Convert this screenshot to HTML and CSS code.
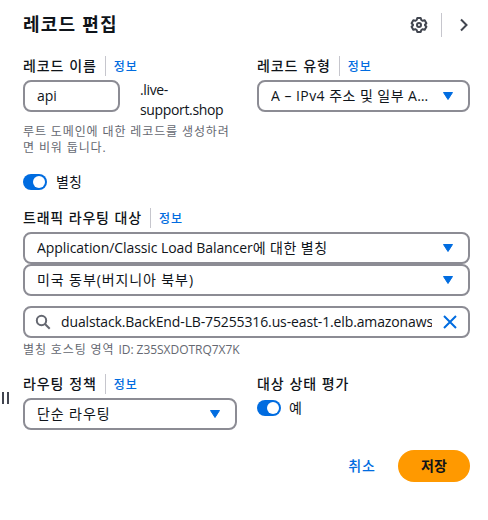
FILE: index.html
```html
<!DOCTYPE html>
<html lang="ko">
<head>
<meta charset="utf-8">
<title>레코드 편집</title>
<link rel="stylesheet" href="styles.css">
</head>
<body>
<div class="handle"><i></i><i></i></div>
<main class="panel">
  <header class="header">
    <h1>레코드 편집</h1>
    <svg class="gear" width="18" height="18" viewBox="0 0 18 18"><path d="M7.300 2h3.400l.6 2 1.400.8 2-.5 1.700 2.900L15 8.700v.6l1.400 1.500-1.700 2.900-2-.5-1.400.8-.6 2H7.300l-.6-2-1.400-.8-2 .5-1.700-2.900L3 9.300v-.6L1.600 7.200l1.700-2.900 2 .5 1.400-.8z"/><circle cx="9" cy="9" r="2"/></svg>
    <span class="bar"></span>
    <svg class="chevron" width="10" height="14" viewBox="0 0 10 14"><path d="M2 1.500 7.500 7 2 12.500"/></svg>
  </header>

  <div class="columns top">
    <section>
      <div class="label"><b>레코드 이름</b><a>정보</a></div>
      <div class="name">
        <div class="field api">api</div>
        <div class="domain">.live-<br><span>support.shop</span></div>
      </div>
      <p class="hint">루트 도메인에 대한 레코드를 생성하려<br>면 비워 둡니다.</p>
    </section>
    <section>
      <div class="label"><b>레코드 유형</b><a>정보</a></div>
      <div class="field type"><span class="t-type">A – IPv4 주소 및 일부 A…</span><svg class="caret" width="12" height="10" viewBox="0 0 12 10"><path d="M1.500 1.500h9L6 8.500z"/></svg></div>
    </section>
  </div>

  <div class="switch alias"><i class="toggle"></i><span>별칭</span></div>

  <section>
    <div class="label target"><b>트래픽 라우팅 대상</b><a>정보</a></div>
    <div class="field"><span class="ko"><span class="latin">Application/Classic Load Balancer</span>에 대한 별칭</span><svg class="caret" width="12" height="10" viewBox="0 0 12 10"><path d="M1.500 1.500h9L6 8.500z"/></svg></div>
    <div class="field"><span class="ko wide">미국 동부(버지니아 북부)</span><svg class="caret" width="12" height="10" viewBox="0 0 12 10"><path d="M1.500 1.500h9L6 8.500z"/></svg></div>
    <div class="field search">
      <svg class="lens" width="16" height="16" viewBox="0 0 16 16"><circle cx="6.500" cy="6.500" r="4.700"/><path d="m10 10 4.700 4.700"/></svg>
      <span class="t-host">dualstack.BackEnd-LB-75255316.us-east-1.elb.amazonaws</span>
      <svg class="clear" width="14" height="14" viewBox="0 0 14 14"><path d="m1 1 12 12M13 1 1 13"/></svg>
    </div>
    <p class="hint zone">별칭 호스팅 영역 <span>ID: Z35SXDOTRQ7X7K</span></p>
  </section>

  <div class="columns bottom">
    <section>
      <div class="label"><b>라우팅 정책</b><a>정보</a></div>
      <div class="field policy"><span class="ko wide">단순 라우팅</span><svg class="caret" width="12" height="10" viewBox="0 0 12 10"><path d="M1.500 1.500h9L6 8.500z"/></svg></div>
    </section>
    <section>
      <div class="label"><b>대상 상태 평가</b></div>
      <div class="switch health"><i class="toggle"></i><span>예</span></div>
    </section>
  </div>

  <footer class="actions"><a>취소</a><button>저장</button></footer>
</main>
</body>
</html>
```
FILE: styles.css
```css
* { box-sizing: border-box; }
body {
  margin: 0;
  width: 488px;
  height: 520px;
  position: relative;
  overflow: hidden;
  background: #fff;
  color: #0f141a;
  font: 14px/20px "Open Sans", "Noto Sans CJK KR", sans-serif;
  white-space: nowrap;
}
a { color: #006ce0; }
svg { display: block; flex: none; fill: none; stroke: #424650; stroke-width: 2; }
.handle { position: absolute; left: 2px; top: 392px; display: flex; gap: 3px; }
.handle i { width: 2px; height: 12px; background: #424650; }
.panel { padding: 13px 17px 0 23px; }
.header { display: flex; align-items: center; height: 24px; }
h1 { margin: 0 auto 2px 0; font-size: 18px; line-height: 24px; font-weight: 700; letter-spacing: 1.2px; }
.gear { stroke-linejoin: round; }
.bar { width: 1px; height: 24px; margin: 0 17px 0 13px; background: #c6c6cd; }
.chevron { margin-right: 2px; }
.columns { display: grid; grid-template-columns: 214px 213px; column-gap: 20px; }
.top { margin-top: 19px; height: 98px; }
.label { display: flex; height: 20px; margin-bottom: 4px; }
.label b { font: 500 14px/18px "Noto Sans CJK KR", sans-serif; letter-spacing: .9px; }
.label.target b { letter-spacing: .8px; }
.label a { margin-left: 8px; padding-left: 8px; border-left: 1px solid #c6c6cd; font: 500 12px/19px "Noto Sans CJK KR", sans-serif; letter-spacing: 1.1px; }
.name { display: flex; height: 40px; }
.field { display: flex; align-items: center; height: 32px; padding: 0 14px 0 12px; border: 2px solid #8c8c94; border-radius: 8px; overflow: hidden; }
.panel > section { width: 447px; }
.field > span { flex: 1; min-width: 0; overflow: hidden; }
.field > .t-type { letter-spacing: .45px; }
.ko { letter-spacing: .45px; }
.wide { letter-spacing: .9px; }
.latin { letter-spacing: -.08px; }
.api { width: 97px; }
.domain { margin-left: 20px; letter-spacing: -.35px; }
.caret { fill: #006ce0; stroke: #006ce0; stroke-width: 1; stroke-linejoin: round; }
.hint { margin: 4px 0 0; color: #656871; font-size: 12px; line-height: 16px; letter-spacing: .88px; }
.hint span { letter-spacing: -.04px; }
.alias { margin-top: 20px; margin-bottom: 18px; }
.switch { display: flex; align-items: center; height: 16px; }
.switch span { margin-left: 9px; }
.toggle { width: 24px; height: 16px; padding: 2px; border-radius: 8px; background: #006ce0; }
.toggle::after { content: ""; display: block; width: 12px; height: 12px; margin-left: 8px; border-radius: 50%; background: #fff; }
.search { margin-top: 10px; padding: 0 11px 0 10px; }
.search .t-host { margin: 0 11px 0 10px; letter-spacing: -.13px; }
.lens { stroke: #656871; }
.clear { stroke: #006ce0; }
.bottom { margin-top: 16px; }
.health { margin-top: 6px; }
.health span { margin-left: 8px; }
.actions { display: flex; justify-content: flex-end; align-items: center; width: 447px; margin-top: 20px; font-weight: 500; }
.actions a { padding-bottom: 2px; letter-spacing: 1px; font-family: "Noto Sans CJK KR", sans-serif; }
button { width: 72px; height: 32px; margin-left: 22px; padding: 0 0 2px; border: 0; border-radius: 16px; background: #ff9900; color: #0f141a; font: 700 14px/20px "Noto Sans CJK KR", sans-serif; }
```
